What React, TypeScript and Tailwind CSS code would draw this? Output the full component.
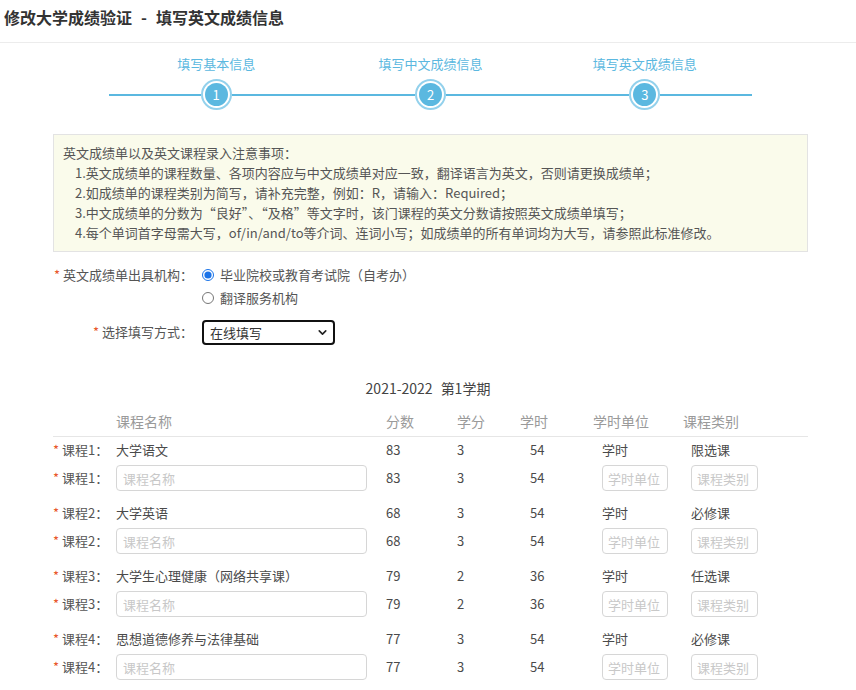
import { ChevronDown } from 'lucide-react';

const steps = ['填写基本信息', '填写中文成绩信息', '填写英文成绩信息'];

const notes = [
  '1.英文成绩单的课程数量、各项内容应与中文成绩单对应一致，翻译语言为英文，否则请更换成绩单；',
  '2.如成绩单的课程类别为简写，请补充完整，例如：R，请输入：Required；',
  '3.中文成绩单的分数为“良好”、“及格”等文字时，该门课程的英文分数请按照英文成绩单填写；',
  '4.每个单词首字母需大写，of/in/and/to等介词、连词小写；如成绩单的所有单词均为大写，请参照此标准修改。',
];

const courses = [
  { name: '大学语文', score: 83, credit: 3, hours: 54, unit: '学时', type: '限选课' },
  { name: '大学英语', score: 68, credit: 3, hours: 54, unit: '学时', type: '必修课' },
  { name: '大学生心理健康（网络共享课）', score: 79, credit: 2, hours: 36, unit: '学时', type: '任选课' },
  { name: '思想道德修养与法律基础', score: 77, credit: 3, hours: 54, unit: '学时', type: '必修课' },
];

const rowCols = 'grid grid-cols-[63px_270px_71px_63px_73px_90px_1fr] items-center';

const Star = () => <span className="text-[#e8562a] mr-[3px]">*</span>;

const StepItem = ({ index, label }: { index: number; label: string }) => (
  <div className="flex flex-col items-center">
    <div className="h-[22px] leading-[22px] text-[13px] text-[#5bb8e0]">{label}</div>
    <div className="mt-[4px] flex w-full items-center">
      <div className="h-[2px] flex-1 bg-[#5bb8e0]" />
      <div className="flex h-[31px] w-[31px] items-center justify-center rounded-full border-2 border-[#93d1ec] bg-white">
        <div className="flex h-[23px] w-[23px] items-center justify-center rounded-full bg-[#5bb8e0] text-[13px] text-white">
          {index}
        </div>
      </div>
      <div className="h-[2px] flex-1 bg-[#5bb8e0]" />
    </div>
  </div>
);

const CourseGroup = ({ no, c }: { no: number; c: (typeof courses)[number] }) => (
  <div className="mb-[7px] text-[13px] text-[#4a4a4a]">
    <div className={`${rowCols} h-[26px]`}>
      <div className="text-[#555]">
        <Star />
        课程{no}：
      </div>
      <div>{c.name}</div>
      <div>{c.score}</div>
      <div>{c.credit}</div>
      <div className="pl-[10px]">{c.hours}</div>
      <div className="pl-[9px]">{c.unit}</div>
      <div className="pl-[8px]">{c.type}</div>
    </div>
    <div className={`${rowCols} h-[30px]`}>
      <div className="text-[#555]">
        <Star />
        课程{no}：
      </div>
      <input
        placeholder="课程名称"
        className="h-[26px] w-[251px] rounded-[4px] border border-[#d6d6d6] px-[6px] text-[13px] outline-none placeholder:text-[#c8c8c8]"
      />
      <div>{c.score}</div>
      <div>{c.credit}</div>
      <div className="pl-[10px]">{c.hours}</div>
      <div className="pl-[9px]">
        <input
          placeholder="学时单位"
          className="h-[26px] w-[66px] rounded-[4px] border border-[#d6d6d6] px-[5px] text-[13px] outline-none placeholder:text-[#c8c8c8]"
        />
      </div>
      <div className="pl-[8px]">
        <input
          placeholder="课程类别"
          className="h-[26px] w-[67px] rounded-[4px] border border-[#d6d6d6] px-[5px] text-[13px] outline-none placeholder:text-[#c8c8c8]"
        />
      </div>
    </div>
  </div>
);

export default function App() {
  return (
    <div
      className="min-h-[690px] w-[856px] bg-white text-[#333]"
      style={{ fontFamily: '"Noto Sans CJK SC", "Liberation Sans", sans-serif' }}
    >
      <header className="h-[43px] border-b border-[#ececec] pl-[4px] pt-[6px]">
        <h1 className="text-[16px] font-bold leading-[22px] text-[#333]">
          修改大学成绩验证<span className="mx-[9px]">-</span>填写英文成绩信息
        </h1>
      </header>

      <div className="ml-[109px] mt-[10px] grid w-[643px] grid-cols-3">
        {steps.map((s, i) => (
          <StepItem key={s} index={i + 1} label={s} />
        ))}
      </div>

      <div className="mx-[53px] mt-[24px] w-[755px] border border-[#e3e3e3] bg-[#fafbeb] pb-[8px] pl-[9px] pt-[8px] text-[13px] leading-[20px] text-[#555]">
        <div>英文成绩单以及英文课程录入注意事项：</div>
        {notes.map((n) => (
          <div key={n} className="pl-[12px]">
            {n}
          </div>
        ))}
      </div>

      <div className="ml-[53px] mt-[12px] text-[13px] text-[#555]">
        <div className="grid grid-cols-[140px_1fr] gap-x-[9px]">
          <div className="h-[22px] text-right leading-[22px]">
            <Star />
            英文成绩单出具机构：
          </div>
          <div className="flex flex-col">
            <label className="flex h-[22px] items-center gap-[6px]">
              <input type="radio" name="org" defaultChecked className="m-0 h-[12px] w-[12px] accent-[#1a73e8]" />
              毕业院校或教育考试院（自考办）
            </label>
            <label className="flex h-[23px] items-center gap-[6px]">
              <input type="radio" name="org" className="m-0 h-[12px] w-[12px]" />
              翻译服务机构
            </label>
          </div>
          <div className="mt-[11px] h-[24px] text-right leading-[24px]">
            <Star />
            选择填写方式：
          </div>
          <div className="mt-[11px]">
            <div className="flex h-[25px] w-[133px] items-center justify-between rounded-[4px] border-2 border-[#111] pl-[6px] pr-[4px] text-[13px] text-[#333]">
              <span>在线填写</span>
              <ChevronDown size={13} strokeWidth={3} className="text-[#222]" />
            </div>
          </div>
        </div>
      </div>

      <div className="mt-[32px] text-center text-[14px] leading-[22px] text-[#444]">
        2021-2022<span className="ml-[8px]">第1学期</span>
      </div>

      <div className="mx-[53px] mt-[8px] w-[755px]">
        <div className={`${rowCols} h-[30px] border-b border-[#e6e6e6] text-[14px] text-[#9a9a9a]`}>
          <div />
          <div>课程名称</div>
          <div>分数</div>
          <div>学分</div>
          <div>学时</div>
          <div>学时单位</div>
          <div>课程类别</div>
        </div>
        {courses.map((c, i) => (
          <CourseGroup key={c.name} no={i + 1} c={c} />
        ))}
      </div>
    </div>
  );
}
